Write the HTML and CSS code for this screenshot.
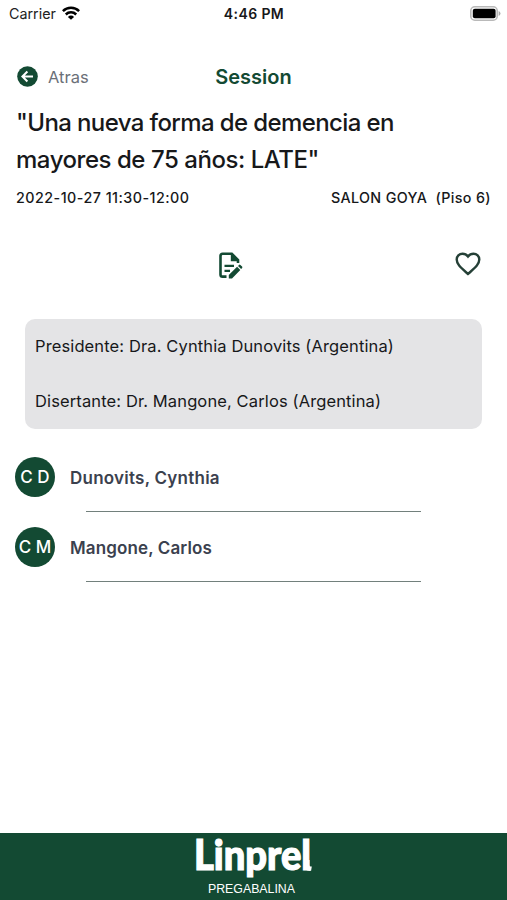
FILE: index.html
```html
<!DOCTYPE html>
<html lang="es">
<head>
<meta charset="utf-8">
<title>Session</title>
<link rel="stylesheet" href="styles.css">
</head>
<body>
<div class="screen">
  <header class="status">
    <div class="carrier"><span>Carrier</span>
      <svg width="18" height="14" viewBox="0 0 18 14"><g fill="none" stroke="#000" stroke-width="2.5"><path d="M.9 5.2a11.5 11.5 0 0 1 16.2 0"/><path d="M3.8 8.5a7.4 7.4 0 0 1 10.4 0"/></g><path d="M9 13.8 5.9 10.9a4.4 4.4 0 0 1 6.2 0z"/></svg>
    </div>
    <div class="time">4:46 PM</div>
    <svg class="battery" width="31" height="15" viewBox="0 0 31 15"><rect x=".8" y=".8" width="26.4" height="13.4" rx="4" fill="#fff" stroke="#b9b9b9" stroke-width="1.6"/><rect x="2.8" y="2.7" width="22.8" height="9.6" rx="2"/><path d="M28.6 5a2.6 2.6 0 0 1 0 5z" fill="#aaa"/></svg>
  </header>
  <nav class="nav">
    <a class="back"><svg width="21" height="21" viewBox="0 0 21 21"><circle cx="10.5" cy="10.5" r="10.3" fill="#134a33"/><path d="M16 10.5H5.7M10.4 5.5l-5 5 5 5" fill="none" stroke="#fff" stroke-width="2"/></svg><span>Atras</span></a>
    <h2>Session</h2>
  </nav>
  <h1><span class="line1">"Una nueva forma de demencia en</span><br><span class="line2">mayores de 75 años: LATE"</span></h1>
  <div class="meta"><span class="date">2022-10-27 11:30-12:00</span><span class="room">SALON GOYA&nbsp; (Piso 6)</span></div>
  <div class="actions">
    <svg class="note" width="24" height="27" viewBox="0 0 24 27"><path d="M7.500 24.6H3.500Q1.500 24.6 1.500 22.4V4Q1.500 1.8 3.700 1.8H12.8L19 8V11" fill="none" stroke="#134a33" stroke-width="2.6"/><path d="M11.8 1.500V9.2H19.800z" fill="#134a33"/><path d="M5.500 13.900H15M5.500 18.900H11" stroke="#134a33" stroke-width="2.3"/><path d="M9.800 26.4V23l8.3-8.200 3.200 3.200-8.300 8.400zM19 13.900l1-1q.7-.6 1.400 0l1.700 1.700q.6.700 0 1.400l-1 1z" fill="#134a33"/></svg>
    <svg class="heart" width="26" height="24" viewBox="0 0 26 24"><path d="M13 22 11.3 20.5C5 14.8 1.7 11.8 1.7 7.6A5.8 5.8 0 0 1 7.5 1.7c2.1 0 4.1 1 5.5 2.8 1.4-1.8 3.4-2.8 5.5-2.8a5.8 5.8 0 0 1 5.8 5.9c0 4.2-3.3 7.2-9.6 12.9z" fill="none" stroke="#254037" stroke-width="2.4"/></svg>
  </div>
  <section class="roles"><p class="chair">Presidente: Dra. Cynthia Dunovits (Argentina)</p><p class="speaker">Disertante: Dr. Mangone, Carlos (Argentina)</p></section>
  <ul class="people">
    <li><span class="avatar">C D</span><span class="name">Dunovits, Cynthia</span></li>
    <li><span class="avatar">C M</span><span class="name narrow">Mangone, Carlos</span></li>
  </ul>
  <footer class="brand">
    <svg width="130" height="67" viewBox="0 0 130 67" fill="#fff"><text class="logo" x="4" y="37" textLength="117" lengthAdjust="spacingAndGlyphs">Linprel</text><path d="M114.500 27h5v5q0 1.500 1.300 1.500h1l-.7 4.300q-6.600.8-6.600-4.800z"/><text class="sub" x="18" y="60" textLength="87" lengthAdjust="spacingAndGlyphs">PREGABALINA</text></svg>
  </footer>
</div>
</body>
</html>
```
FILE: styles.css
```css
* { box-sizing: border-box; margin: 0; padding: 0; }
body { background: #fff; font-family: Inter, "Liberation Sans", sans-serif; color: #17181a; }
svg { display: block; flex: none; }
.screen { height: 900px; display: flex; flex-direction: column; overflow: hidden; }
.status { height: 27px; display: grid; grid-template-columns: 1fr auto 1fr; align-items: center; padding: 0 6px 0 9px; }
.carrier { display: flex; align-items: center; gap: 6px; font-size: 14.3px; color: #222; }
.carrier svg { margin-top: -1px; }
.time { font-size: 14px; font-weight: 600; letter-spacing: .4px; margin-left: -2px; }
.battery { justify-self: end; margin-top: -1px; }
.nav { height: 56px; margin-top: 22px; padding: 0 17px; display: grid; grid-template-columns: 1fr auto 1fr; align-items: center; }
.back { display: flex; align-items: center; gap: 10px; font-size: 16.5px; color: #6b7078; }
.back svg { margin-top: -1px; }
h2 { font-size: 20px; line-height: 28px; font-weight: 600; color: #134a33; }
h1 { height: 73px; padding-left: 16px; font-size: 24px; line-height: 36.5px; font-weight: 500; white-space: nowrap; }
.line1 { letter-spacing: -.61px; }
.line2 { letter-spacing: -.46px; }
.meta { display: flex; justify-content: space-between; height: 40px; padding: 0 16px; line-height: 40px; font-size: 14.3px; font-weight: 500; }
.date { letter-spacing: .48px; }
.room { letter-spacing: .36px; }
.actions { height: 101px; display: flex; justify-content: space-between; padding: 34px 26px 0 219px; }
.roles { height: 110px; margin: 0 25px; padding: 0 10px; border-radius: 10px; background: #e4e4e6; font-size: 16.5px; line-height: 55px; white-space: nowrap; letter-spacing: .12px; }
.people { list-style: none; padding: 28px 86px 0 15px; }
.people li { display: flex; align-items: flex-start; height: 55px; margin-bottom: 15px; border-bottom: 1.5px solid transparent; border-image: linear-gradient(to right, transparent 72px, #72807c 72px) 1; }
.avatar { width: 40px; height: 40px; border-radius: 50%; background: #134a33; color: #fff; text-align: center; line-height: 40px; font-size: 17px; font-weight: 500; white-space: nowrap; }
.name { margin-left: 15px; line-height: 42px; font-size: 17px; font-weight: 600; color: #3b414e; letter-spacing: .24px; }
.narrow { letter-spacing: .13px; }
.brand { height: 67px; margin-top: auto; padding-left: 190px; background: #134a33; }
.logo { font: 900 42px Lato, sans-serif; stroke: #fff; stroke-width: 1.2px; }
.sub { font: 12px "Liberation Sans", sans-serif; }
```
